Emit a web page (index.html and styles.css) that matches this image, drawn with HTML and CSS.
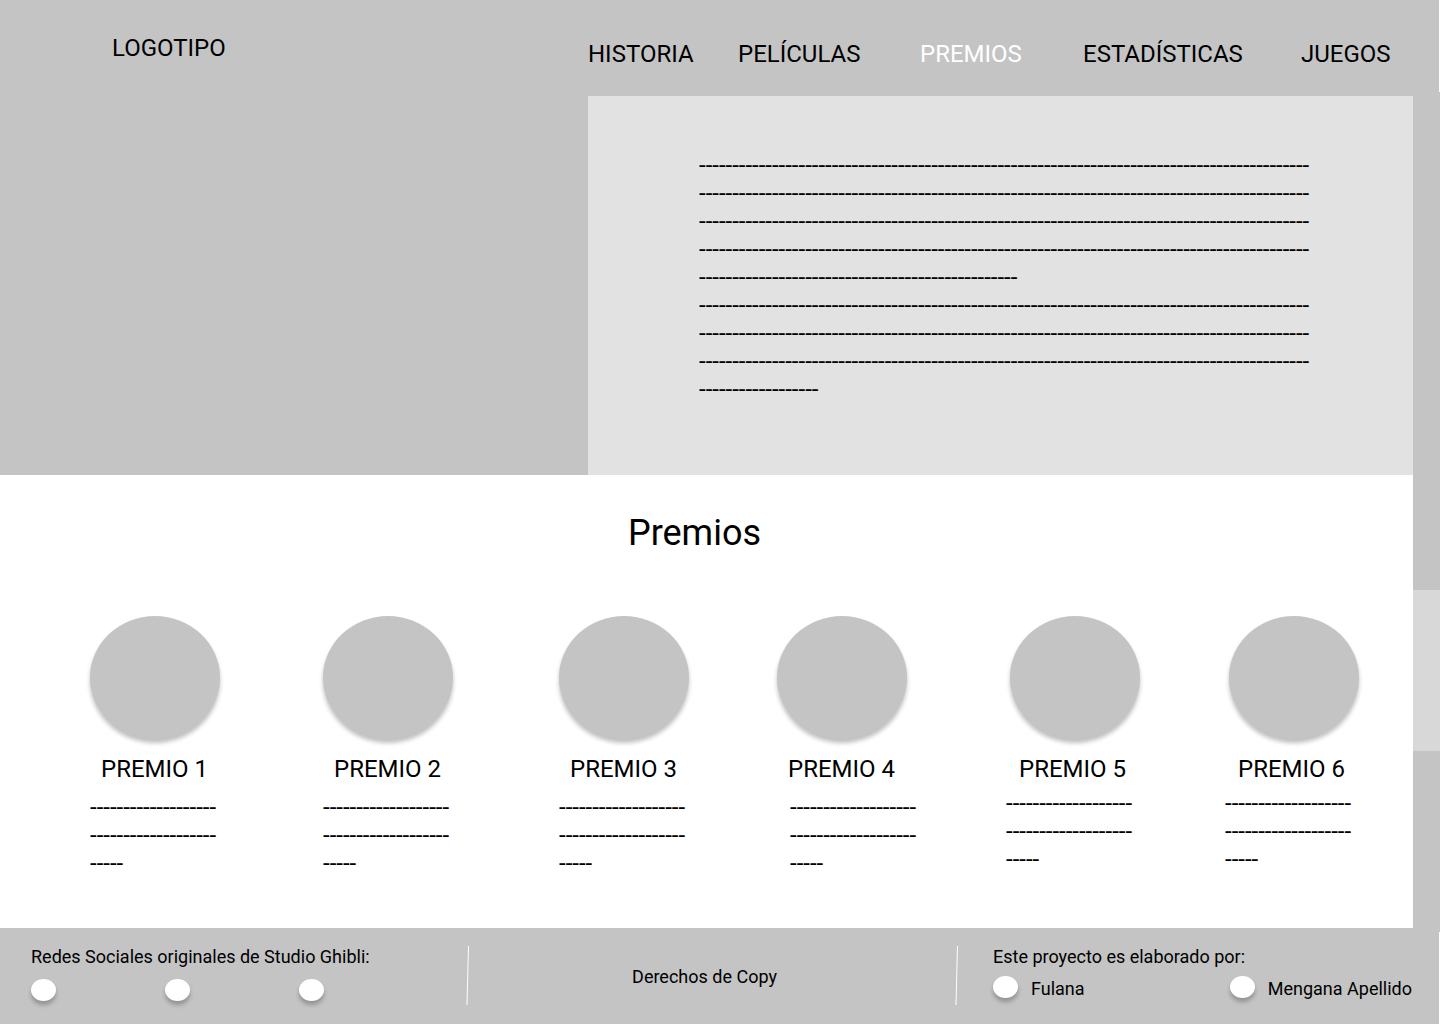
FILE: index.html
```html
<!DOCTYPE html>
<html lang="es">
<head>
<meta charset="utf-8">
<meta name="viewport" content="width=device-width, initial-scale=1">
<title>Premios</title>
<link rel="stylesheet" href="styles.css">
</head>
<body>
<header class="header">
  <a class="logo" href="#">LOGOTIPO</a>
  <nav class="nav">
    <a href="#">HISTORIA</a>
    <a href="#">PELÍCULAS</a>
    <a class="active" href="#" aria-current="page">PREMIOS</a>
    <a href="#">ESTADÍSTICAS</a>
    <a href="#">JUEGOS</a>
  </nav>
</header>
<div class="middle">
  <main class="main">
    <section class="hero">
      <div class="hero-image"></div>
      <p class="hero-text">--------------------------------------------------------------------------------------------<br>--------------------------------------------------------------------------------------------<br>--------------------------------------------------------------------------------------------<br>--------------------------------------------------------------------------------------------<br>------------------------------------------------<br>--------------------------------------------------------------------------------------------<br>--------------------------------------------------------------------------------------------<br>--------------------------------------------------------------------------------------------<br>------------------</p>
    </section>
    <section class="awards">
      <h1 class="awards-title">Premios</h1>
      <div class="award-list">
        <article class="award"><div class="award-image"></div><h2>PREMIO 1</h2><p>-------------------<br>-------------------<br>-----</p></article>
        <article class="award"><div class="award-image"></div><h2>PREMIO 2</h2><p>-------------------<br>-------------------<br>-----</p></article>
        <article class="award"><div class="award-image"></div><h2>PREMIO 3</h2><p>-------------------<br>-------------------<br>-----</p></article>
        <article class="award award-indented"><div class="award-image"></div><h2>PREMIO 4</h2><p>-------------------<br>-------------------<br>-----</p></article>
        <article class="award award-tight"><div class="award-image"></div><h2>PREMIO 5</h2><p>-------------------<br>-------------------<br>-----</p></article>
        <article class="award award-tight"><div class="award-image"></div><h2>PREMIO 6</h2><p>-------------------<br>-------------------<br>-----</p></article>
      </div>
    </section>
  </main>
  <div class="track" aria-hidden="true"><div class="thumb"></div></div>
</div>
<footer class="footer">
  <section class="social">
    <p>Redes Sociales originales de Studio Ghibli:</p>
    <div class="social-links">
      <a class="dot" href="#" aria-label="Red social 1"></a>
      <a class="dot" href="#" aria-label="Red social 2"></a>
      <a class="dot" href="#" aria-label="Red social 3"></a>
    </div>
  </section>
  <section class="copy">
    <svg class="divider" width="4" height="60" viewBox="0 0 4 60" aria-hidden="true"><path d="M2.5 0 1 59" stroke="#fff" fill="none"/></svg>
    <p>Derechos de Copy</p>
  </section>
  <section class="authors">
    <svg class="divider" width="4" height="60" viewBox="0 0 4 60" aria-hidden="true"><path d="M2.5 0 1 59" stroke="#fff" fill="none"/></svg>
    <div class="credits">
      <p>Este proyecto es elaborado por:</p>
      <div class="author-list">
        <div class="author"><span class="dot"></span><span class="name">Fulana</span></div>
        <div class="author"><span class="dot"></span><span class="name">Mengana Apellido</span></div>
      </div>
    </div>
  </section>
</footer>
</body>
</html>
```
FILE: styles.css
```css
* { box-sizing: border-box; }

body {
  margin: 0;
  min-height: 100vh;
  display: flex;
  flex-direction: column;
  background: #fff;
  color: #000;
  font: 24px/28px Roboto, sans-serif;
}

h1, h2, p { margin: 0; font-weight: 400; }
a { color: inherit; text-decoration: none; }

.header {
  display: grid;
  grid-template-columns: 588fr 851fr;
  min-height: 92px;
  margin-right: 1px;
  background: #c4c4c4;
}
.logo { padding: 34px 0 0 112px; }
.nav {
  display: grid;
  grid-template-columns: 150fr 182fr 163fr 218fr 138fr;
  padding-top: 40px;
}
.active { color: #fff; }

.middle { flex: 1; display: flex; }
.main {
  flex: 1;
  min-width: 0;
  display: flex;
  flex-direction: column;
  border: solid #c4c4c4;
  border-width: 4px 0;
}
.track {
  width: 27px;
  background: #c4c4c4;
  display: grid;
  grid-template-rows: 498fr 161fr 181fr;
}
.thumb { grid-row: 2; background: #d8d8d8; }

.hero { display: grid; grid-template-columns: 588fr 825fr; }
.hero-image { background: #c4c4c4; }
.hero-text {
  padding: 55px 0 72px 111px;
  background: #e2e2e2;
  white-space: nowrap;
}

.awards { flex: 1; padding-top: 37px; }
.awards-title {
  padding-right: 24px;
  font-size: 36px;
  line-height: 42px;
  text-align: center;
}
.award-list {
  display: grid;
  grid-template-columns: 233fr 236fr 218fr 233fr 219fr 184fr;
  padding: 62px 0 51px 90px;
}
.award-image {
  width: 130px;
  height: 123px;
  border-radius: 50%;
  background: #c4c4c4;
  box-shadow: 0 4px 4px rgba(0, 0, 0, .25);
}
.award h2 { padding: 16px 0 0 11px; font-size: 24px; }
.award p { margin-top: 10px; }
.award-indented p { padding-left: 13px; }
.award-tight h2 { padding-left: 9px; }
.award-tight p { margin: 6px 0 0 -4px; }

.footer {
  display: grid;
  grid-template-columns: 466fr 489fr 484fr;
  min-height: 92px;
  margin-right: 1px;
  padding-top: 14px;
  background: #c4c4c4;
  font-size: 18px;
  line-height: 21px;
}
.social { padding-left: 31px; }
.social-links { display: flex; gap: 109px; padding-top: 12px; }
.dot {
  width: 25px;
  height: 22px;
  border-radius: 50%;
  background: #fff;
  box-shadow: 0 4px 4px rgba(0, 0, 0, .25);
}
.copy { display: flex; }
.copy p { flex: 1; padding: 20px 16px 0 0; text-align: center; }
.authors { display: flex; }
.credits { flex: 1; padding: 0 27px 0 34px; }
.author-list { display: flex; justify-content: space-between; padding-top: 9px; }
.author { display: flex; gap: 13px; }
.name { padding-top: 2px; }
```
